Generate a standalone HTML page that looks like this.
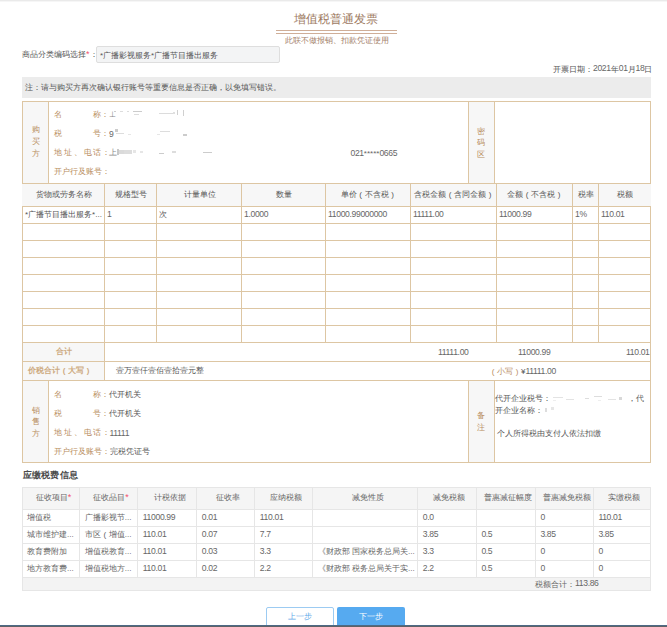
<!DOCTYPE html>
<html><head><meta charset="utf-8">
<style>
*{box-sizing:border-box;margin:0;padding:0}
html,body{width:667px;height:627px;overflow:hidden;background:#fff}
body{position:relative;font-family:"Liberation Sans",sans-serif;font-size:8px;color:#555;line-height:1}
.a{position:absolute}
.t{position:absolute;white-space:nowrap;line-height:10px;height:10px}
.br{color:#b88d5e}
.bb{color:#cdaa80;font-weight:bold}
.p{display:inline-block;font-style:normal;width:8px;text-align:center}
.v{white-space:normal;width:8px}
.g{color:#666}
.n{font-size:8.6px;letter-spacing:-0.35px;color:#676767;position:relative;top:-0.4px}
.rs{color:#f2506e;font-size:9px;line-height:0;position:relative;top:-0.5px}
</style></head><body>
<div class="a" style="left:0px;top:0px;width:667px;height:1px;background:#eaeaea;"></div>
<div class="a" style="left:0px;top:1px;width:667px;height:0.5px;background:#f6f6f6;"></div>
<div class="t " style="left:294px;top:13px;font-size:12.3px;line-height:12px;height:12px;color:#9d7a62">增值税普通发票</div>
<div class="a" style="left:276px;top:30px;width:121px;height:1px;background:#cfae98;"></div>
<div class="a" style="left:276px;top:33px;width:121px;height:1px;background:#cfae98;"></div>
<div class="t " style="left:285.3px;top:35.8px;font-size:7.6px;color:#a3806a;letter-spacing:-0.05px">此联不做报销、扣款凭证使用</div>
<div class="t " style="left:22px;top:50px;">商品分类编码选择<span class="rs">*</span>：</div>
<div class="a" style="left:96px;top:46px;width:183.5px;height:16.5px;background:#f3f4f5;border:1px solid #dedede;border-radius:2px"></div>
<div class="t " style="left:100px;top:51px;">*广播影视服务*广播节目播出服务</div>
<div class="t " style="left:553px;top:63.5px;font-size:7.88px">开票日期：<span class="n">2021</span>年<span class="n">01</span>月<span class="n">18</span>日</div>
<div class="a" style="left:22px;top:77px;width:629px;height:21px;background:#ececec;"></div>
<div class="t " style="left:25px;top:82.5px;">注：请与购买方再次确认银行账号等重要信息是否正确，以免填写错误。</div>
<div class="a" style="left:23px;top:102px;width:25px;height:81px;background:#f7f7f7;"></div>
<div class="a" style="left:469px;top:102px;width:25px;height:81px;background:#f7f7f7;"></div>
<div class="a" style="left:22px;top:101px;width:629px;height:1px;background:#ddc6a3;"></div>
<div class="a" style="left:22px;top:101px;width:1px;height:361px;background:#ddc6a3;"></div>
<div class="a" style="left:650px;top:101px;width:1px;height:361px;background:#ddc6a3;"></div>
<div class="a" style="left:48px;top:101px;width:1px;height:82px;background:#ddc6a3;"></div>
<div class="a" style="left:468px;top:101px;width:1px;height:82px;background:#ddc6a3;"></div>
<div class="a" style="left:494px;top:101px;width:1px;height:82px;background:#ddc6a3;"></div>
<div class="t br v" style="left:31.5px;top:124.3px;line-height:11.9px;height:36px">购买方</div>
<div class="t br v" style="left:477px;top:125.5px;line-height:11.7px;height:36px">密码区</div>
<div class="t br" style="left:54px;top:109.5px;">名<span style="display:inline-block;width:31px"></span>称：</div>
<div class="t br" style="left:54px;top:129px;">税<span style="display:inline-block;width:31px"></span>号：</div>
<div class="t br" style="left:54px;top:148px;">地</div>
<div class="t br" style="left:63.8px;top:148px;">址</div>
<div class="t br" style="left:74px;top:148px;">、</div>
<div class="t br" style="left:83.6px;top:148px;">电</div>
<div class="t br" style="left:93.4px;top:148px;">话</div>
<div class="t br" style="left:102px;top:148px;">：</div>
<div class="t br" style="left:54px;top:166.5px;">开户行及账号：</div>
<div class="t " style="left:109px;top:109.5px;color:#888">⊥</div>
<div class="a" style="left:114px;top:110.5px;width:2px;height:1px;background:#ccc;"></div>
<div class="a" style="left:120px;top:110.5px;width:3px;height:1px;background:#ddd;"></div>
<div class="a" style="left:127px;top:110.5px;width:2px;height:1px;background:#ddd;"></div>
<div class="a" style="left:133px;top:110.5px;width:9px;height:1px;background:#ccc;"></div>
<div class="a" style="left:134px;top:113.5px;width:5px;height:1px;background:#ddd;"></div>
<div class="a" style="left:159px;top:113px;width:14px;height:1px;background:#dcdcdc;"></div>
<div class="a" style="left:173px;top:112px;width:2px;height:2px;background:#e0e0e0;"></div>
<div class="a" style="left:177px;top:110px;width:1px;height:5px;background:#d0d0d0;"></div>
<div class="a" style="left:183px;top:110px;width:1px;height:6px;background:#d0d0d0;"></div>
<div class="t " style="left:109px;top:129px;color:#888"><span class="n">9</span></div>
<div class="a" style="left:115px;top:129px;width:3px;height:3px;background:#ccc;"></div>
<div class="a" style="left:116px;top:133px;width:8px;height:1px;background:#ddd;"></div>
<div class="a" style="left:128px;top:134px;width:3px;height:1px;background:#e6e6e6;"></div>
<div class="a" style="left:160px;top:131px;width:10px;height:1px;background:#ddd;"></div>
<div class="a" style="left:157px;top:134px;width:3px;height:1px;background:#e6e6e6;"></div>
<div class="a" style="left:183px;top:134px;width:4px;height:2px;background:#ccc;"></div>
<div class="t " style="left:109px;top:148px;color:#888">上</div>
<div class="a" style="left:117px;top:149px;width:2px;height:6px;background:#c8c8c8;"></div>
<div class="a" style="left:119px;top:150px;width:5px;height:4px;background:#dadada;"></div>
<div class="a" style="left:124px;top:150px;width:8px;height:4px;background:#ddd;"></div>
<div class="a" style="left:133px;top:150px;width:3px;height:3px;background:#e6e6e6;"></div>
<div class="a" style="left:140px;top:151px;width:3px;height:2px;background:#e6e6e6;"></div>
<div class="a" style="left:159px;top:153px;width:5px;height:1px;background:#ccc;"></div>
<div class="a" style="left:172px;top:151px;width:4px;height:2px;background:#ddd;"></div>
<div class="a" style="left:203px;top:152px;width:9px;height:1px;background:#ccc;"></div>
<div class="t g" style="left:350.5px;top:148px;"><span class="n">021</span>*****<span class="n">0665</span></div>
<div class="a" style="left:22px;top:183px;width:629px;height:23px;background:#f7f7f7;"></div>
<div class="a" style="left:23px;top:343px;width:81px;height:38px;background:#f7f7f7;"></div>
<div class="a" style="left:22px;top:183px;width:629px;height:1px;background:#ddc6a3;"></div>
<div class="a" style="left:22px;top:206px;width:629px;height:1px;background:#ddc6a3;"></div>
<div class="a" style="left:22px;top:223px;width:629px;height:1px;background:#ddc6a3;"></div>
<div class="a" style="left:22px;top:240px;width:629px;height:1px;background:#ddc6a3;"></div>
<div class="a" style="left:22px;top:257px;width:629px;height:1px;background:#ddc6a3;"></div>
<div class="a" style="left:22px;top:274px;width:629px;height:1px;background:#ddc6a3;"></div>
<div class="a" style="left:22px;top:291px;width:629px;height:1px;background:#ddc6a3;"></div>
<div class="a" style="left:22px;top:308px;width:629px;height:1px;background:#ddc6a3;"></div>
<div class="a" style="left:22px;top:325px;width:629px;height:1px;background:#ddc6a3;"></div>
<div class="a" style="left:22px;top:342px;width:629px;height:1px;background:#ddc6a3;"></div>
<div class="a" style="left:22px;top:361px;width:629px;height:1px;background:#ddc6a3;"></div>
<div class="a" style="left:22px;top:380px;width:629px;height:1px;background:#ddc6a3;"></div>
<div class="a" style="left:104px;top:183px;width:1px;height:159px;background:#ddc6a3;"></div>
<div class="a" style="left:156px;top:183px;width:1px;height:159px;background:#ddc6a3;"></div>
<div class="a" style="left:241px;top:183px;width:1px;height:159px;background:#ddc6a3;"></div>
<div class="a" style="left:325px;top:183px;width:1px;height:159px;background:#ddc6a3;"></div>
<div class="a" style="left:410px;top:183px;width:1px;height:159px;background:#ddc6a3;"></div>
<div class="a" style="left:496px;top:183px;width:1px;height:159px;background:#ddc6a3;"></div>
<div class="a" style="left:572px;top:183px;width:1px;height:159px;background:#ddc6a3;"></div>
<div class="a" style="left:598px;top:183px;width:1px;height:159px;background:#ddc6a3;"></div>
<div class="a" style="left:104px;top:342px;width:1px;height:39px;background:#ddc6a3;"></div>
<div class="t " style="left:23px;top:189.5px;width:82px;text-align:center;">货物或劳务名称</div>
<div class="t " style="left:105px;top:189.5px;width:52px;text-align:center;">规格型号</div>
<div class="t " style="left:157px;top:189.5px;width:85px;text-align:center;">计量单位</div>
<div class="t " style="left:242px;top:189.5px;width:84px;text-align:center;">数量</div>
<div class="t " style="left:326px;top:189.5px;width:85px;text-align:center;">单价<i class="p">(</i>不含税<i class="p">)</i></div>
<div class="t " style="left:411px;top:189.5px;width:86px;text-align:center;">含税金额<i class="p">(</i>含同金额<i class="p">)</i></div>
<div class="t " style="left:497px;top:189.5px;width:76px;text-align:center;">金额<i class="p">(</i>不含税<i class="p">)</i></div>
<div class="t " style="left:573px;top:189.5px;width:26px;text-align:center;">税率</div>
<div class="t " style="left:599px;top:189.5px;width:52px;text-align:center;">税额</div>
<div class="t " style="left:25px;top:209.5px;">*广播节目播出服务*...</div>
<div class="t " style="left:107px;top:209.5px;"><span class="n">1</span></div>
<div class="t " style="left:159px;top:209.5px;">次</div>
<div class="t " style="left:244px;top:209.5px;"><span class="n">1.0000</span></div>
<div class="t " style="left:328px;top:209.5px;"><span class="n">11000.99000000</span></div>
<div class="t " style="left:413px;top:209.5px;"><span class="n">11111.00</span></div>
<div class="t " style="left:499px;top:209.5px;"><span class="n">11000.99</span></div>
<div class="t " style="left:575px;top:209.5px;"><span class="n">1%</span></div>
<div class="t " style="left:601px;top:209.5px;"><span class="n">110.01</span></div>
<div class="t bb" style="left:56px;top:347px;">合计</div>
<div class="t " style="left:438px;top:347px;"><span class="n">11111.00</span></div>
<div class="t " style="left:518px;top:347px;"><span class="n">11000.99</span></div>
<div class="t " style="left:626px;top:347px;"><span class="n">110.01</span></div>
<div class="t bb" style="left:28px;top:366px;">价税合计<i class="p">(</i>大写<i class="p">)</i></div>
<div class="t " style="left:116px;top:366px;">壹万壹仟壹佰壹拾壹元整</div>
<div class="t " style="left:489px;top:366px;"><span class="br"><i class="p">(</i>小写<i class="p">)</i></span>¥<span class="n">11111.00</span></div>
<div class="a" style="left:23px;top:381px;width:25px;height:81px;background:#f7f7f7;"></div>
<div class="a" style="left:469px;top:381px;width:25px;height:81px;background:#f7f7f7;"></div>
<div class="a" style="left:48px;top:381px;width:1px;height:81px;background:#ddc6a3;"></div>
<div class="a" style="left:468px;top:381px;width:1px;height:81px;background:#ddc6a3;"></div>
<div class="a" style="left:494px;top:381px;width:1px;height:81px;background:#ddc6a3;"></div>
<div class="a" style="left:22px;top:461.5px;width:629px;height:1px;background:#ddc6a3;"></div>
<div class="t br v" style="left:31.5px;top:404.5px;line-height:11.5px;height:36px">销售方</div>
<div class="t br v" style="left:477px;top:409.8px;line-height:12.4px;height:36px">备注</div>
<div class="t br" style="left:54px;top:389.5px;">名<span style="display:inline-block;width:31px"></span>称：<span style="color:#555">代开机关</span></div>
<div class="t br" style="left:54px;top:409px;">税<span style="display:inline-block;width:31px"></span>号：<span style="color:#555">代开机关</span></div>
<div class="t br" style="left:54px;top:428px;">地</div>
<div class="t br" style="left:63.8px;top:428px;">址</div>
<div class="t br" style="left:74px;top:428px;">、</div>
<div class="t br" style="left:83.6px;top:428px;">电</div>
<div class="t br" style="left:93.4px;top:428px;">话</div>
<div class="t br" style="left:102px;top:428px;">：</div>
<div class="t " style="left:109.5px;top:428px;"><span class="n">11111</span></div>
<div class="t br" style="left:54px;top:446.5px;">开户行及账号：<span style="color:#555">完税凭证号</span></div>
<div class="t " style="left:495px;top:394.2px;">代开企业税号：</div>
<div class="t " style="left:628px;top:394.2px;">，代</div>
<div class="a" style="left:553px;top:397px;width:10px;height:1px;background:#e3e3e3;"></div>
<div class="a" style="left:553px;top:400px;width:3px;height:1px;background:#eee;"></div>
<div class="a" style="left:566px;top:399px;width:8px;height:1px;background:#e3e3e3;"></div>
<div class="a" style="left:585px;top:398px;width:4px;height:1px;background:#ddd;"></div>
<div class="a" style="left:594px;top:396px;width:8px;height:1px;background:#ddd;"></div>
<div class="a" style="left:598px;top:400px;width:3px;height:1px;background:#eee;"></div>
<div class="a" style="left:608px;top:399px;width:8px;height:1px;background:#e3e3e3;"></div>
<div class="a" style="left:619px;top:397px;width:3px;height:3px;background:#d8d8d8;"></div>
<div class="t " style="left:495px;top:406px;">开企业名称：</div>
<div class="a" style="left:545px;top:408px;width:2px;height:4px;background:#ddd;"></div>
<div class="a" style="left:551px;top:407px;width:3px;height:3px;background:#e6e6e6;"></div>
<div class="t " style="left:497px;top:428.5px;">个人所得税由支付人依法扣缴</div>
<div class="t " style="left:22.5px;top:470px;font-size:9.2px;font-weight:bold;color:#4a4a4a;letter-spacing:0.3px">应缴税费信息</div>
<div class="a" style="left:22px;top:487px;width:629px;height:22px;background:#f5f5f5;"></div>
<div class="a" style="left:22px;top:577px;width:629px;height:13.5px;background:#f3f3f3;"></div>
<div class="a" style="left:22px;top:487px;width:629px;height:1px;background:#e6e6e6;"></div>
<div class="a" style="left:22px;top:509px;width:629px;height:1px;background:#e6e6e6;"></div>
<div class="a" style="left:22px;top:526px;width:629px;height:1px;background:#e6e6e6;"></div>
<div class="a" style="left:22px;top:543px;width:629px;height:1px;background:#e6e6e6;"></div>
<div class="a" style="left:22px;top:560px;width:629px;height:1px;background:#e6e6e6;"></div>
<div class="a" style="left:22px;top:577px;width:629px;height:1px;background:#e6e6e6;"></div>
<div class="a" style="left:22px;top:590px;width:629px;height:1px;background:#e6e6e6;"></div>
<div class="a" style="left:22px;top:487px;width:1px;height:104px;background:#e6e6e6;"></div>
<div class="a" style="left:650px;top:487px;width:1px;height:104px;background:#e6e6e6;"></div>
<div class="a" style="left:79px;top:487px;width:1px;height:90px;background:#e6e6e6;"></div>
<div class="a" style="left:137px;top:487px;width:1px;height:90px;background:#e6e6e6;"></div>
<div class="a" style="left:196px;top:487px;width:1px;height:90px;background:#e6e6e6;"></div>
<div class="a" style="left:254px;top:487px;width:1px;height:90px;background:#e6e6e6;"></div>
<div class="a" style="left:312px;top:487px;width:1px;height:90px;background:#e6e6e6;"></div>
<div class="a" style="left:417px;top:487px;width:1px;height:90px;background:#e6e6e6;"></div>
<div class="a" style="left:475.6px;top:487px;width:1px;height:90px;background:#e6e6e6;"></div>
<div class="a" style="left:534.6px;top:487px;width:1px;height:90px;background:#e6e6e6;"></div>
<div class="a" style="left:592.6px;top:487px;width:1px;height:90px;background:#e6e6e6;"></div>
<div class="t g" style="left:25px;top:493px;width:57px;text-align:center;">征收项目<span class="rs">*</span></div>
<div class="t g" style="left:82px;top:493px;width:58px;text-align:center;">征收品目<span class="rs">*</span></div>
<div class="t g" style="left:140px;top:493px;width:59px;text-align:center;">计税依据</div>
<div class="t g" style="left:199px;top:493px;width:58px;text-align:center;">征收率</div>
<div class="t g" style="left:257px;top:493px;width:58px;text-align:center;">应纳税额</div>
<div class="t g" style="left:315px;top:493px;width:105px;text-align:center;">减免性质</div>
<div class="t g" style="left:420px;top:493px;width:58.60000000000002px;text-align:center;">减免税额</div>
<div class="t g" style="left:478.6px;top:493px;width:59.0px;text-align:center;">普惠减征幅度</div>
<div class="t g" style="left:537.6px;top:493px;width:58.0px;text-align:center;">普惠减免税额</div>
<div class="t g" style="left:595.6px;top:493px;width:57.39999999999998px;text-align:center;">实缴税额</div>
<div class="t g" style="left:27px;top:512.5px;">增值税</div>
<div class="t g" style="left:84.8px;top:512.5px;">广播影视节...</div>
<div class="t g" style="left:142.8px;top:512.5px;"><span class="n">11000.99</span></div>
<div class="t g" style="left:201.8px;top:512.5px;"><span class="n">0.01</span></div>
<div class="t g" style="left:259.8px;top:512.5px;"><span class="n">110.01</span></div>
<div class="t g" style="left:422.8px;top:512.5px;"><span class="n">0.0</span></div>
<div class="t g" style="left:540.4px;top:512.5px;"><span class="n">0</span></div>
<div class="t g" style="left:598.4px;top:512.5px;"><span class="n">110.01</span></div>
<div class="t g" style="left:27px;top:529.5px;">城市维护建...</div>
<div class="t g" style="left:84.8px;top:529.5px;">市区<i class="p">(</i>增值...</div>
<div class="t g" style="left:142.8px;top:529.5px;"><span class="n">110.01</span></div>
<div class="t g" style="left:201.8px;top:529.5px;"><span class="n">0.07</span></div>
<div class="t g" style="left:259.8px;top:529.5px;"><span class="n">7.7</span></div>
<div class="t g" style="left:422.8px;top:529.5px;"><span class="n">3.85</span></div>
<div class="t g" style="left:481.40000000000003px;top:529.5px;"><span class="n">0.5</span></div>
<div class="t g" style="left:540.4px;top:529.5px;"><span class="n">3.85</span></div>
<div class="t g" style="left:598.4px;top:529.5px;"><span class="n">3.85</span></div>
<div class="t g" style="left:27px;top:546.5px;">教育费附加</div>
<div class="t g" style="left:84.8px;top:546.5px;">增值税教育...</div>
<div class="t g" style="left:142.8px;top:546.5px;"><span class="n">110.01</span></div>
<div class="t g" style="left:201.8px;top:546.5px;"><span class="n">0.03</span></div>
<div class="t g" style="left:259.8px;top:546.5px;"><span class="n">3.3</span></div>
<div class="t g" style="left:317.8px;top:546.5px;">《财政部 国家税务总局关...</div>
<div class="t g" style="left:422.8px;top:546.5px;"><span class="n">3.3</span></div>
<div class="t g" style="left:481.40000000000003px;top:546.5px;"><span class="n">0.5</span></div>
<div class="t g" style="left:540.4px;top:546.5px;"><span class="n">0</span></div>
<div class="t g" style="left:598.4px;top:546.5px;"><span class="n">0</span></div>
<div class="t g" style="left:27px;top:563.5px;">地方教育费...</div>
<div class="t g" style="left:84.8px;top:563.5px;">增值税地方...</div>
<div class="t g" style="left:142.8px;top:563.5px;"><span class="n">110.01</span></div>
<div class="t g" style="left:201.8px;top:563.5px;"><span class="n">0.02</span></div>
<div class="t g" style="left:259.8px;top:563.5px;"><span class="n">2.2</span></div>
<div class="t g" style="left:317.8px;top:563.5px;">《财政部 税务总局关于实...</div>
<div class="t g" style="left:422.8px;top:563.5px;"><span class="n">2.2</span></div>
<div class="t g" style="left:481.40000000000003px;top:563.5px;"><span class="n">0.5</span></div>
<div class="t g" style="left:540.4px;top:563.5px;"><span class="n">0</span></div>
<div class="t g" style="left:598.4px;top:563.5px;"><span class="n">0</span></div>
<div class="t g" style="left:535px;top:578.5px;">税额合计：<span class="n">113.86</span></div>
<div class="a" style="left:266px;top:606.5px;width:68px;height:20px;background:#fff;border:1px solid #9ccbf2;border-radius:2px"></div>
<div class="t " style="left:288px;top:612px;color:#5fa8e8">上一步</div>
<div class="a" style="left:337px;top:606.5px;width:67.5px;height:20px;background:#56aaf0;border-radius:2px"></div>
<div class="t " style="left:359px;top:612px;color:#fff">下一步</div>
<div class="a" style="left:0px;top:625px;width:667px;height:1px;background:#4d6a86;"></div>
<div class="a" style="left:0px;top:626px;width:667px;height:1px;background:#5f6266;"></div>
</body></html>
